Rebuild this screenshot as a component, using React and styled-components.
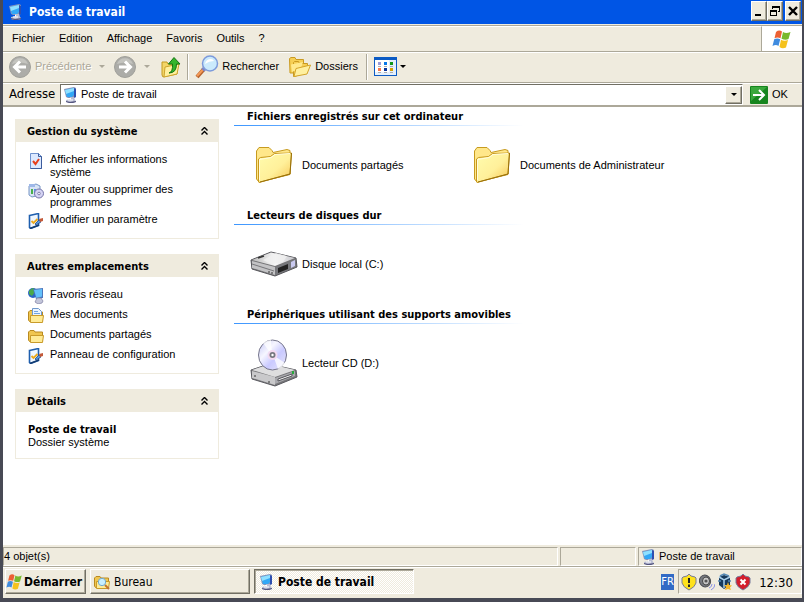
import React from 'react';
import styled, { createGlobalStyle, css } from 'styled-components';

const c = {
  face: '#efebde',
  shadow: '#aca899',
  dark: '#716f64',
  blue: '#0055e5',
  frame: '#484a55',
};
const regular = '"Liberation Sans", Arial, sans-serif';
const wide = '"DejaVu Sans Condensed", "DejaVu Sans", sans-serif';

const GlobalStyle = createGlobalStyle`
  * { box-sizing: border-box; }
  body { margin: 0; background: ${c.frame}; }
  button, input { font: inherit; color: inherit; }
  svg { display: block; flex: none; }
`;

const raised = css`
  border: 1px solid;
  border-color: #fff ${c.dark} ${c.dark} #fff;
  box-shadow: inset -1px -1px 0 ${c.shadow};
`;
const sunken = css`
  border: 1px solid;
  border-color: ${c.shadow} #fff #fff ${c.shadow};
`;

const Screen = styled.div`
  min-height: 100vh;
  display: flex;
  flex-direction: column;
  border: solid ${c.frame};
  border-width: 0 2px 4px 3px;
  background: ${c.face};
  color: #000;
  font: 11px/13px ${regular};
`;
const Window = styled.div`
  flex: 1;
  display: flex;
  flex-direction: column;
`;

const TitleBar = styled.header`
  display: flex;
  align-items: center;
  gap: 5px;
  height: 24px;
  padding: 0 1px 1px 5px;
  background: ${c.blue};
  color: #fff;
`;
const Title = styled.h1`
  flex: 1;
  margin: 0;
  font: bold 12px/16px ${wide};
`;
const Controls = styled.div`
  display: flex;
  padding-bottom: 1px;
`;
const ControlButton = styled.button`
  ${raised}
  display: grid;
  place-items: center;
  width: 16px;
  height: 20px;
  padding: 0;
  margin-left: ${p => (p.$apart ? 2 : 0)}px;
  background: ${c.face};
`;

const MenuRow = styled.div`
  display: flex;
  margin-top: 1px;
  height: 27px;
  border: solid ${c.shadow};
  border-width: 1px 0;
`;
const MenuBar = styled.nav`
  flex: 1;
  display: flex;
  align-items: center;
  padding: 0 0 2px 2px;
  border-top: 1px solid #fff;
  border-right: 1px solid ${c.shadow};
`;
const MenuButton = styled.button`
  border: 0;
  background: none;
  padding: 0 7px;
  line-height: 22px;
`;
const Brand = styled.div`
  display: grid;
  place-items: center;
  width: 40px;
  background: #fff;
`;

const ToolBar = styled.div`
  display: flex;
  align-items: center;
  height: 31px;
  padding: 0 0 2px 6px;
  border-top: 1px solid #fff;
  border-bottom: 1px solid ${c.shadow};
`;
const ToolButton = styled.button`
  display: flex;
  align-items: center;
  gap: ${p => p.$gap || 4}px;
  height: 26px;
  padding: 0;
  margin-right: ${p => p.$after || 0}px;
  border: 0;
  background: none;
  color: ${p => (p.disabled ? c.shadow : '#000')};
  text-shadow: ${p => (p.disabled ? '1px 1px 0 #fff' : 'none')};
`;
const Caret = styled.span`
  width: 0;
  height: 0;
  margin-left: ${p => p.$before || 0}px;
  border: 3px solid transparent;
  border-top-color: ${p => (p.$dim ? c.shadow : '#000')};
  border-bottom-width: 0;
`;
const Divider = styled.span`
  width: 2px;
  height: 26px;
  margin: 0 6px;
  border-left: 1px solid ${c.shadow};
  border-right: 1px solid #fff;
`;

const AddressBar = styled.form`
  display: flex;
  align-items: center;
  height: 24px;
  padding-left: 6px;
  border-top: 1px solid #fff;
  border-bottom: 2px solid ${c.shadow};
`;
const AddressLabel = styled.label`
  width: 51px;
  padding-bottom: 2px;
  font: 13px/18px ${wide};
`;
const AddressField = styled.div`
  flex: 1;
  display: flex;
  align-items: center;
  gap: 2px;
  height: 21px;
  padding-left: 2px;
  border: 1px solid;
  border-color: ${c.dark} #fff #fff ${c.dark};
  background: #fff;
`;
const AddressInput = styled.input`
  flex: 1;
  min-width: 0;
  padding: 0;
  border: 0;
  outline: 0;
  background: none;
`;
const DropButton = styled.button`
  ${raised}
  display: grid;
  place-items: center;
  width: 17px;
  height: 18px;
  padding: 0;
  background: ${c.face};
`;
const GoButton = styled.button`
  display: flex;
  align-items: center;
  gap: 4px;
  width: 59px;
  padding: 0 0 0 7px;
  border: 0;
  background: none;
`;

const Body = styled.div`
  flex: 1;
  display: flex;
  gap: 15px;
  padding-left: 12px;
  background: #fff;
`;
const Sidebar = styled.aside`
  flex: none;
  display: flex;
  flex-direction: column;
  gap: 15px;
  width: 204px;
  padding: 12px 0;
`;
const PanelBox = styled.section`
  border: 1px solid ${c.face};
  border-top: 0;
`;
const PanelHead = styled.button`
  display: flex;
  align-items: center;
  justify-content: space-between;
  width: 100%;
  height: 23px;
  padding: 2px 9px 0 11px;
  border: 0;
  background: ${c.face};
  font: bold 11px/13px ${wide};
`;
const PanelBody = styled.div`
  padding: 11px 12px 9px;
`;
const TaskList = styled.ul`
  display: flex;
  flex-direction: column;
  gap: 4px;
  margin: 0;
  padding: 0;
  list-style: none;
`;
const TaskLink = styled.a`
  display: flex;
  gap: 6px;
  min-height: 16px;
  color: inherit;
  text-decoration: none;
`;
const TaskText = styled.span`
  max-width: 130px;
`;
const DetailName = styled.strong`
  display: block;
  font: bold 11px/13px ${wide};
`;

const Main = styled.main`
  flex: 1;
  min-width: 0;
`;
const GroupBox = styled.section`
  min-height: 99px;
`;
const GroupTitle = styled.h2`
  margin: 0;
  height: 19px;
  padding: 3px 0 0 13px;
  font: bold 11px/13px ${wide};
  border-bottom: 1px solid;
  border-image: linear-gradient(90deg, #3c96ff, #fff 290px) 1;
`;
const Items = styled.div`
  display: flex;
  flex-wrap: wrap;
  padding: 15px 0 0 16px;
`;
const Item = styled.a`
  display: flex;
  align-items: center;
  gap: 4px;
  width: 218px;
  color: inherit;
  text-decoration: none;
`;

const StatusBar = styled.footer`
  display: flex;
  gap: 2px;
  height: 22px;
  padding-top: 2px;
  border-bottom: 1px solid ${c.shadow};
`;
const StatusCell = styled.div`
  ${sunken}
  display: flex;
  align-items: center;
  gap: 2px;
  height: 19px;
  ${p => (p.$width ? `width: ${p.$width}px;` : 'flex: 1;')}
  padding-left: ${p => p.$inset || 0}px;
`;

const TaskBar = styled.div`
  display: flex;
  align-items: center;
  height: 31px;
  padding: 0 0 3px 2px;
  border-top: 1px solid #fff;
`;
const TaskButton = styled.button`
  ${raised}
  display: flex;
  align-items: center;
  gap: 4px;
  width: ${p => p.$width}px;
  height: 25px;
  margin-right: 4px;
  padding: 0 3px;
  background: ${c.face};
  font: 12px/16px ${wide};
  ${p => p.$start && css`
    gap: 1px;
    padding: 0;
    font-weight: bold;
  `}
  ${p => p.$active && css`
    gap: 3px;
    border-color: ${c.dark} #fff #fff ${c.dark};
    box-shadow: inset 1px 1px 0 ${c.shadow};
    background: repeating-conic-gradient(#fff 0 25%, ${c.face} 0 50%) 0 0 / 2px 2px;
    font-weight: bold;
    padding-left: 4px;
  `}
`;
const Language = styled.button`
  width: 13px;
  height: 16px;
  margin: 0 4px 0 auto;
  padding: 0;
  border: 0;
  background: #316ac5;
  color: #fff;
  font: 11px/16px ${wide};
  overflow: hidden;
`;
const Tray = styled.div`
  ${sunken}
  display: flex;
  align-items: center;
  gap: 2px;
  width: 124px;
  height: 25px;
  padding-left: 2px;
`;
const Clock = styled.time`
  flex: 1;
  padding: 2px 2px 0 0;
  text-align: center;
  font: 13px/16px ${wide};
`;

const Computer = () => (
  <svg width="16" height="16" viewBox="0 0 16 16" aria-hidden="true">
    <path d="M1 2 11 0l2 1v9l-3 1H5l-2-1z" fill="#8494bb" />
    <path d="M2 3l9-2v7l-2 2H4z" fill="#32a8f6" />
    <path d="M2 3l9-2v3L3 7z" fill="#8fe0ff" />
    <path d="M11 1l2 1v8l-2 1z" fill="#2e4fb0" />
    <path d="M7 10h4l1 3 1 1v1l-3 1H6l-3-1v-2l4-1z" fill="#b9bdd4" />
    <path d="M3 14l4 1 6-1v1l-3 1H6l-3-1z" fill="#54557e" />
    <path d="M5 13h5M7.500 11v1.500" stroke="#fff" />
  </svg>
);

const Flag = ({ size }) => (
  <svg width={size} height={size} viewBox="0 0 20 20" aria-hidden="true">
    <path d="M4 3q3-2.500 6-.5L8.500 9.200q-3-1.500-6 0z" fill="#ec6033" />
    <path d="M11 3q3 2 7.500 0l-2 7q-3 1.600-7-.3z" fill="#79b92c" />
    <path d="M2.200 10.200q3-1.500 6 0L6.500 17q-2.500-1.800-6 0z" fill="#3f8bdf" />
    <path d="M9 10.700q3 1.800 7 .4L14 18.500q-3.500 1.800-6.500-.4z" fill="#f5c21d" />
  </svg>
);

const RoundArrow = ({ back }) => (
  <svg width="22" height="22" viewBox="0 0 22 22" aria-hidden="true">
    <circle cx="11" cy="11" r="10.500" fill="#acaca8" stroke="#a0a09a" />
    <path d="M3 8a8.500 8.500 0 0 1 16 0q-8-3-16 0z" fill="#c4c4bf" />
    <path
      d={back ? 'M17 11H6M11 5.500 5.500 11l5.500 5.500' : 'M5 11h11M11 5.500l5.500 5.500-5.500 5.500'}
      fill="none" stroke="#fff" strokeWidth="3"
    />
  </svg>
);

const UpFolder = () => (
  <svg width="20" height="22" viewBox="0 0 20 22" aria-hidden="true">
    <path d="M1 6h5l1 2h9v10L2 21 1 19z" fill="#f3d568" stroke="#c39a20" />
    <path d="M4 11 18 8l-2 10L3 21z" fill="#fff0a0" stroke="#cda42c" />
    <path d="M8 17q4-1 3.500-9H7.500L13 1.500 19 8h-3.500q0 9-7.500 9z" fill="#35b52c" stroke="#137513" />
  </svg>
);

const Search = () => (
  <svg width="24" height="24" viewBox="0 0 24 24" aria-hidden="true">
    <path d="M9 14 2 22" stroke="#b7622c" strokeWidth="4" />
    <path d="M8.500 14 2 21" stroke="#f49a58" strokeWidth="2" />
    <path d="m7 13 3 3" stroke="#7b86c8" strokeWidth="2" />
    <circle cx="15" cy="8.500" r="7.500" fill="#cbeafc" stroke="#7d9bdb" strokeWidth="1.500" />
    <path d="M10 9q1-5 6-5 2 0 3 2-5 0-9 3z" fill="#fff" />
  </svg>
);

const Folders = () => (
  <svg width="22" height="22" viewBox="0 0 22 22" aria-hidden="true">
    <path d="M.5 2.500 2 1.500h4l1 2h7.500v4L5 17H1z" fill="#f6cf55" stroke="#c99a22" />
    <path d="M4.500 6.500l1-1h4l1 2h8V15L6 20.500H4.500z" fill="#f6cf55" stroke="#c99a22" />
    <path d="M2 8.500 14 6l-2 6-9 4z" fill="#ffe98d" />
    <path d="M7 12.500 21.500 9 18 18 5 20.500z" fill="#fff0a0" stroke="#d3a42a" />
  </svg>
);

const Views = () => (
  <svg width="23" height="19" viewBox="0 0 23 19" shapeRendering="crispEdges" aria-hidden="true">
    <path d="M0 0h23v19H0z" fill="#0c5bc4" />
    <path d="M1 3h21v15H1z" fill="#e5f0fc" />
    <path d="M1 3h14v12H1z" fill="#fff" />
    <path d="M4 5h3v3H4z" fill="#9c9bd8" />
    <path d="M10 5h3v3h-3z" fill="#0878e8" />
    <path d="M16 5h3v3h-3z" fill="#109618" />
    <path d="M4 11h3v3H4z" fill="#f9764a" />
    <path d="M10 11h3v3h-3z" fill="#08349a" />
    <path d="M16 11h3v3h-3z" fill="#d5a000" />
    <path d="M4 9h3v1H4zM10 9h3v1h-3zM16 9h3v1h-3zM4 15h3v1H4zM10 15h3v1h-3zM16 15h3v1h-3z" fill="#a9acb0" />
  </svg>
);

const Go = () => (
  <svg width="18" height="18" viewBox="0 0 18 18" aria-hidden="true">
    <rect width="18" height="18" rx="1" fill="#16851e" />
    <path d="M1 1h16L1 15z" fill="#3aa83c" />
    <path d="M3 9h11M9 4l5 5-5 5" fill="none" stroke="#fff" strokeWidth="2" />
  </svg>
);

const Chevrons = () => (
  <svg width="9" height="9" viewBox="0 0 9 9" aria-hidden="true">
    <path d="m1.500 3.500 3-3 3 3m-6 4 3-3 3 3" fill="none" stroke="#000" strokeWidth="1.400" />
  </svg>
);

const InfoSheet = () => (
  <svg width="16" height="16" viewBox="0 0 16 16" aria-hidden="true">
    <path d="M2.500.5h8l3 3v12h-11z" fill="#dce9ff" stroke="#6f92ce" />
    <path d="M10.500.5v3h3v12h-11" fill="none" stroke="#3c5c9c" />
    <path d="m5 8 2.500 3L11 6" fill="none" stroke="#e8401c" strokeWidth="2" />
  </svg>
);

const Programs = () => (
  <svg width="16" height="16" viewBox="0 0 16 16" aria-hidden="true">
    <path d="M1 3 8 1l4 2v9l-8 2-3-2z" fill="#d9e4f5" stroke="#7795c5" />
    <path d="M1 1h6v3H1z" fill="#9eb8e8" />
    <path d="M3 6h2v5H3z" fill="#49b04b" />
    <path d="M6 6h2v5H6z" fill="#5c8de0" />
    <circle cx="11" cy="10.500" r="4.500" fill="#d5d3f4" stroke="#7474a8" />
    <circle cx="11" cy="10.500" r="1.300" fill="#fff" stroke="#8080aa" />
  </svg>
);

const Settings = () => (
  <svg width="16" height="16" viewBox="0 0 16 16" aria-hidden="true">
    <path d="M1.500 2.500 10.500.5v12l-8 3-1-1z" fill="#eef6ff" stroke="#1f5fae" strokeWidth="1.600" />
    <path d="M2 15.500 11 12" stroke="#143c70" strokeWidth="1.500" />
    <path d="m3.500 8 2 2 4-4" fill="none" stroke="#eda91c" strokeWidth="1.800" />
    <path d="m7 11 4-4 2 2-5 3z" fill="#5698e5" stroke="#244d87" strokeWidth=".8" />
    <path d="m11 6 4-1v3l-3 1z" fill="#c35a3a" />
  </svg>
);

const Network = () => (
  <svg width="16" height="16" viewBox="0 0 16 16" aria-hidden="true">
    <circle cx="5" cy="5" r="5" fill="#2b65c5" />
    <path d="M1 3q2-3 5-3l1 4-3 4-3-2z" fill="#49a94b" />
    <path d="M5 1 15 0v10l-7 1z" fill="#4c76bd" />
    <path d="M6 2 14 1v7.500L8.500 10z" fill="#63c0fa" />
    <path d="M9 10h4l2 3-1 2-4 1-3-2z" fill="#c3c6da" stroke="#7c7da0" strokeWidth=".7" />
  </svg>
);

const SmallFolder = ({ sheet, lens }) => (
  <svg width="16" height="16" viewBox="0 0 16 16" aria-hidden="true">
    <path d="M.5 4 2 2.500h4L7 4h7.500v9.500h-13L.5 12z" fill="#f0c650" stroke="#b98a20" />
    {sheet && <path d="M4.500.5h6l3 3V10h-9z" fill="#eaf4ff" stroke="#6f98cc" />}
    {sheet && <path d="M6 3.500h4M6 5.500h6" stroke="#72a4df" />}
    <path d="M2.500 7.500h13l-1 7h-12z" fill="#ffeb96" stroke="#c99b2a" />
    {lens && <path d="m11 11 4 4" stroke="#c27330" strokeWidth="2" />}
    {lens && <circle cx="8" cy="8" r="3.700" fill="#c8efff" stroke="#72a9cc" />}
  </svg>
);

const BigFolder = () => (
  <svg width="48" height="48" viewBox="0 0 48 48" aria-hidden="true">
    <defs>
      <linearGradient id="folderFront" x1="0" y1="0" x2="1" y2="1">
        <stop offset="0" stopColor="#fffcae" />
        <stop offset=".55" stopColor="#fff09a" />
        <stop offset="1" stopColor="#f6c451" />
      </linearGradient>
    </defs>
    <path d="M6.500 10 9 6.500h10l3 3 1 2 14-3 3 1v24L9 41l-2.500-3z" fill="#ffe78a" stroke="#c79b20" />
    <path d="M8.500 41V18l2-1.500 10-1 4-3L41.500 12 40 33 9 41.500z" fill="url(#folderFront)" stroke="#c8981c" />
    <path d="M10 41 40 33l1.500-21" fill="none" stroke="#98700c" />
    <path d="M9.500 39V18.500l11.500-2 4-3 15-1" fill="none" stroke="#fffde0" />
  </svg>
);

const HardDisk = () => (
  <svg width="48" height="48" viewBox="0 0 48 48" aria-hidden="true">
    <defs>
      <linearGradient id="diskTop">
        <stop offset="0" stopColor="#bcbcbc" />
        <stop offset=".55" stopColor="#f8f8f8" />
        <stop offset="1" stopColor="#c5c5ca" />
      </linearGradient>
    </defs>
    <path d="M1 20 21 12l25 6 1 9-22 9L2 29z" fill="#747476" stroke="#55555a" />
    <path d="M2 20 21 12.500 45 18l-20 8z" fill="url(#diskTop)" />
    <path d="m13 20 13-7 11 3-4 6-12 2z" fill="#f0f0f0" opacity=".8" />
    <path d="m2 21 23 6v8L2 28z" fill="#c3c3c5" />
    <path d="M2 24 24 31" stroke="#77777a" />
    <path d="m25 27 21-8v8l-21 8z" fill="#77787c" />
    <path d="m28 28 10-4v5l-10 4z" fill="#222" />
    <path d="m41 22 4-2v6l-4 2z" fill="#c9c9ef" />
    <path d="m8 18 6-2" stroke="#333" strokeWidth="1.500" />
    <path d="M19 31v2M22 32v2" stroke="#333" />
  </svg>
);

const CdDrive = () => (
  <svg width="48" height="48" viewBox="0 0 48 48" aria-hidden="true">
    <defs>
      <linearGradient id="disc" x1="0" y1="0" x2="1" y2="1">
        <stop offset="0" stopColor="#c2c4f4" />
        <stop offset=".35" stopColor="#f6f6ff" />
        <stop offset=".6" stopColor="#c9c9ff" />
        <stop offset="1" stopColor="#e9e9f8" />
      </linearGradient>
    </defs>
    <path d="M1 31 19 25l27 6 1 7-22 9L2 40z" fill="#777779" stroke="#5a5a60" />
    <path d="m2 31 18-6 25 6-20 7z" fill="#dededf" />
    <path d="m2 32 23 6v8L2 39z" fill="#c9c9cb" />
    <path d="m25 39 20-7v5l-20 8z" fill="#a9a9ae" />
    <path d="m28 40 14-5v2l-14 5z" fill="#f4f4f4" stroke="#55555a" />
    <path d="M43 32v3" stroke="#26a93a" strokeWidth="2" />
    <path d="M19 42v2M5 36v2" stroke="#333" />
    <ellipse cx="22.500" cy="16" rx="14" ry="15" fill="url(#disc)" stroke="#74748a" />
    <path d="M22 16 13 4q4-3 8-3zM23 16l5 14q5-2 7-6z" fill="#fff" opacity=".75" />
    <circle cx="22.500" cy="16" r="5" fill="#f3d9f0" />
    <circle cx="22.500" cy="16" r="3" fill="#77777f" />
    <circle cx="22.500" cy="16" r="1.200" fill="#fff" />
  </svg>
);

const Shield = ({ danger }) => (
  <svg width="16" height="18" viewBox="0 0 16 18" aria-hidden="true">
    <path
      d="M8 1 10 3l4 1 1 1v5q-1 4-7 7-6-3-7-7V5l1-1 4-1z"
      fill={danger ? '#d31d2c' : '#ffe21c'} stroke="#777b99"
    />
    {danger ? (
      <path d="m5.500 6.500 5 5m0-5-5 5" stroke="#fff" strokeWidth="2" />
    ) : (
      <path d="M8 5v5M8 11.500V14" stroke="#222" strokeWidth="2" />
    )}
  </svg>
);

const Speaker = () => (
  <svg width="16" height="18" viewBox="0 0 16 18" aria-hidden="true">
    <ellipse cx="6" cy="8" rx="5.500" ry="6" fill="#777a80" stroke="#4c4d52" transform="rotate(-20 6 8)" />
    <ellipse cx="7" cy="8" rx="3.500" ry="4" fill="#c9c9c9" stroke="#444" />
    <circle cx="7" cy="8" r="1.600" fill="#555" />
    <path d="M10 15q3-1 3-4M12 17q4-2 4-6" fill="none" stroke="#8990e5" />
  </svg>
);

const Cube = () => (
  <svg width="16" height="18" viewBox="0 0 16 18" aria-hidden="true">
    <path d="m7 2 6 2v8l-6 4-5-4V4z" fill="#16395c" />
    <path d="m2 4 5 3 6-3M7 7v8" stroke="#a9cfeb" strokeWidth="1.500" fill="none" />
    <path d="M3 3 7 1l5 2M1 8h3M11 8h3" stroke="#5689b5" strokeWidth="1.500" fill="none" />
    <path d="m11 9 1 3 3 .5-2 2 1 2.500-3-1-3 1 1-3-2-2h3z" fill="#f5b62a" />
  </svg>
);

const Panel = ({ title, children }) => (
  <PanelBox>
    <PanelHead type="button" aria-expanded="true">
      {title}
      <Chevrons />
    </PanelHead>
    <PanelBody>{children}</PanelBody>
  </PanelBox>
);

const Tasks = ({ items }) => (
  <TaskList>
    {items.map(([label, icon]) => (
      <li key={label}>
        <TaskLink href="#">
          {icon}
          <TaskText>{label}</TaskText>
        </TaskLink>
      </li>
    ))}
  </TaskList>
);

const Group = ({ title, items }) => (
  <GroupBox>
    <GroupTitle>{title}</GroupTitle>
    <Items>
      {items.map(([label, icon]) => (
        <Item key={label} href="#">
          {icon}
          {label}
        </Item>
      ))}
    </Items>
  </GroupBox>
);

const menus = ['Fichier', 'Edition', 'Affichage', 'Favoris', 'Outils', '?'];

export default function App() {
  return (
    <Screen>
      <GlobalStyle />
      <Window>
        <TitleBar>
          <Computer />
          <Title>Poste de travail</Title>
          <Controls>
            <ControlButton type="button" aria-label="Réduire">
              <svg width="10" height="10" viewBox="0 0 10 10"><path d="M1 8h6v2H1z" /></svg>
            </ControlButton>
            <ControlButton type="button" aria-label="Restaurer">
              <svg width="10" height="10" viewBox="0 0 10 10" shapeRendering="crispEdges">
                <path d="M2 0h8v6H8V5h1V2H3v1H2zM0 4h7v6H0zm1 2v3h5V6z" fillRule="evenodd" />
              </svg>
            </ControlButton>
            <ControlButton type="button" aria-label="Fermer" $apart>
              <svg width="10" height="10" viewBox="0 0 10 10">
                <path d="m1 1 8 8m0-8L1 9" stroke="#000" strokeWidth="2.400" />
              </svg>
            </ControlButton>
          </Controls>
        </TitleBar>

        <MenuRow>
          <MenuBar aria-label="Menu">
            {menus.map(m => <MenuButton type="button" key={m}>{m}</MenuButton>)}
          </MenuBar>
          <Brand><Flag size={20} /></Brand>
        </MenuRow>

        <ToolBar>
          <ToolButton type="button" disabled $after={9}>
            <RoundArrow back />
            Précédente
            <Caret $dim $before={4} />
          </ToolButton>
          <ToolButton type="button" disabled aria-label="Suivante" $after={11}>
            <RoundArrow />
            <Caret $dim $before={4} />
          </ToolButton>
          <ToolButton type="button" aria-label="Dossier parent"><UpFolder /></ToolButton>
          <Divider />
          <ToolButton type="button" $gap={3} $after={10}><Search />Rechercher</ToolButton>
          <ToolButton type="button" $after={2}><Folders />Dossiers</ToolButton>
          <Divider />
          <ToolButton type="button" aria-label="Affichages" $gap={3}><Views /><Caret /></ToolButton>
        </ToolBar>

        <AddressBar onSubmit={e => e.preventDefault()}>
          <AddressLabel htmlFor="address">Adresse</AddressLabel>
          <AddressField>
            <Computer />
            <AddressInput id="address" defaultValue="Poste de travail" />
            <DropButton type="button" aria-label="Ouvrir la liste"><Caret /></DropButton>
          </AddressField>
          <GoButton type="submit"><Go />OK</GoButton>
        </AddressBar>

        <Body>
          <Sidebar>
            <Panel title="Gestion du système">
              <Tasks
                items={[
                  ['Afficher les informations système', <InfoSheet />],
                  ['Ajouter ou supprimer des programmes', <Programs />],
                  ['Modifier un paramètre', <Settings />],
                ]}
              />
            </Panel>
            <Panel title="Autres emplacements">
              <Tasks
                items={[
                  ['Favoris réseau', <Network />],
                  ['Mes documents', <SmallFolder sheet />],
                  ['Documents partagés', <SmallFolder />],
                  ['Panneau de configuration', <Settings />],
                ]}
              />
            </Panel>
            <Panel title="Détails">
              <DetailName>Poste de travail</DetailName>
              Dossier système
            </Panel>
          </Sidebar>
          <Main>
            <Group
              title="Fichiers enregistrés sur cet ordinateur"
              items={[
                ['Documents partagés', <BigFolder />],
                ['Documents de Administrateur', <BigFolder />],
              ]}
            />
            <Group title="Lecteurs de disques dur" items={[['Disque local (C:)', <HardDisk />]]} />
            <Group
              title="Périphériques utilisant des supports amovibles"
              items={[['Lecteur CD (D:)', <CdDrive />]]}
            />
          </Main>
        </Body>

        <StatusBar>
          <StatusCell>4 objet(s)</StatusCell>
          <StatusCell $width={76} />
          <StatusCell $width={164} $inset={2}><Computer />Poste de travail</StatusCell>
        </StatusBar>
      </Window>

      <TaskBar>
        <TaskButton type="button" $width={81} $start><Flag size={17} />Démarrer</TaskButton>
        <TaskButton type="button" $width={160}><SmallFolder lens />Bureau</TaskButton>
        <TaskButton type="button" $width={160} $active aria-pressed="true">
          <Computer />Poste de travail
        </TaskButton>
        <Language type="button">FR</Language>
        <Tray>
          <Shield />
          <Speaker />
          <Cube />
          <Shield danger />
          <Clock>12:30</Clock>
        </Tray>
      </TaskBar>
    </Screen>
  );
}
